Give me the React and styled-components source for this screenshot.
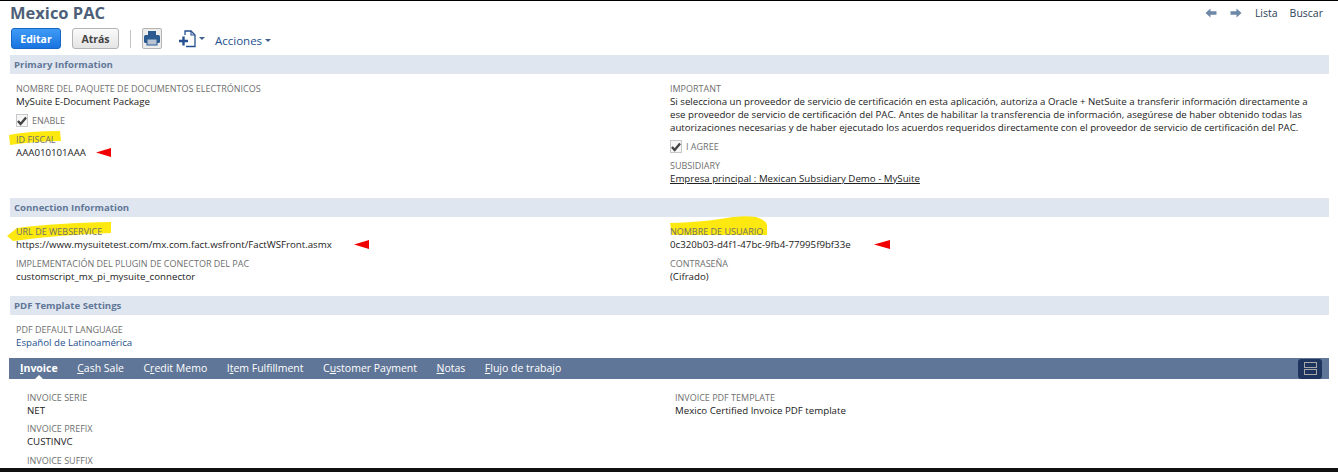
import styled, { createGlobalStyle } from "styled-components";

const GlobalStyle = createGlobalStyle`
html,body{margin:0;padding:0;background:#fff;overflow:hidden;}
body{font-family:"Open Sans","Liberation Sans",sans-serif;font-size:10px;color:#222;}
`

const SECTION_BG = "#e0e6ef"
const SLATE = "#5f7698"

function ArrowLeft({ color }) {
    return (
        <svg width="12" height="10" viewBox="0 0 12 10">
            <path d="M5.5 0.5 L0.5 5 L5.5 9.5 L5.5 6.8 L11.5 6.8 L11.5 3.2 L5.5 3.2 Z" fill={color} />
        </svg>
    )
}

function ArrowRight({ color }) {
    return (
        <svg width="12" height="10" viewBox="0 0 12 10">
            <path d="M6.5 0.5 L11.5 5 L6.5 9.5 L6.5 6.8 L0.5 6.8 L0.5 3.2 L6.5 3.2 Z" fill={color} />
        </svg>
    )
}

function RedArrow({ width = 15 }) {
    return (
        <svg width={width} height="9" viewBox="0 0 15 9" preserveAspectRatio="none">
            <path d="M0 4.5 L15 0 L15 9 Z" fill="#f00000" />
        </svg>
    )
}

function Check() {
    return (
        <CheckBox>
            <svg width="11" height="10" viewBox="0 0 11 10">
                <path d="M1 5 L4 8.2 L10 1.2" fill="none" stroke="#444" strokeWidth="2.6" />
            </svg>
        </CheckBox>
    )
}

function Field({ label, children, arrow, arrowGap, arrowWidth, mark, link, mt }) {
    return (
        <FieldBox mt={mt}>
            <Label>
                {mark}
                <span>{label}</span>
            </Label>
            <ValueRow>
                <Value link={link}>{children}</Value>
                {arrow && <ArrowSlot gap={arrowGap}><RedArrow width={arrowWidth} /></ArrowSlot>}
            </ValueRow>
        </FieldBox>
    )
}

const tabs = [
    { name: "Invoice", key: "I", rest: "nvoice", active: true },
    { name: "Cash Sale", key: "C", rest: "ash Sale" },
    { name: "Credit Memo", pre: "C", key: "r", rest: "edit Memo" },
    { name: "Item Fulfillment", pre: "I", key: "t", rest: "em Fulfillment" },
    { name: "Customer Payment", pre: "C", key: "u", rest: "stomer Payment" },
    { name: "Notas", key: "N", rest: "otas" },
    { name: "Flujo de trabajo", key: "F", rest: "lujo de trabajo" },
]

export default function App() {
    return (
        <Page>
            <GlobalStyle />
            <TitleRow>
                <Title>Mexico PAC</Title>
                <TopNav>
                    <ArrowLeft color="#6d87a6" />
                    <NavArrow><ArrowRight color="#6d87a6" /></NavArrow>
                    <NavLink>Lista</NavLink>
                    <NavLink>Buscar</NavLink>
                </TopNav>
            </TitleRow>
            <Toolbar>
                <PrimaryButton>Editar</PrimaryButton>
                <SecondaryButton>Atrás</SecondaryButton>
                <Separator />
                <IconButton>
                    <svg width="16" height="15" viewBox="0 0 16 15">
                        <path d="M4 0 H12 V4 H4 Z" fill="#2b5a91" />
                        <rect x="0" y="4" width="16" height="8" rx="1.5" fill="#2b5a91" />
                        <rect x="3" y="8" width="10" height="6" fill="#b8c4d4" stroke="#2b5a91" />
                    </svg>
                </IconButton>
                <NewIcon>
                    <svg width="17" height="18" viewBox="0 0 17 18">
                        <path d="M6 5 V1 H12 L16 5 V16.5 H7" fill="none" stroke="#24508f" strokeWidth="1.3" />
                        <path d="M12 1 V5 H16" fill="none" stroke="#24508f" strokeWidth="1.1" />
                        <path d="M0 11 H9 M4.5 6.5 V15.5" stroke="#24508f" strokeWidth="2.4" />
                    </svg>
                    <Caret />
                </NewIcon>
                <Actions>Acciones<Caret /></Actions>
            </Toolbar>

            <SectionBar mt="6px">Primary Information</SectionBar>
            <TwoCols>
                <Col>
                    <Field label="NOMBRE DEL PAQUETE DE DOCUMENTOS ELECTRÓNICOS">MySuite E-Document Package</Field>
                    <CheckRow><Check /><CheckLabel>ENABLE</CheckLabel></CheckRow>
                    <Field
                        mt="6px"
                        label="ID FISCAL"
                        arrow
                        arrowGap="10px"
                        mark={
                            <Marker width="54" height="16" viewBox="0 0 54 16" left="-8px" top="-3px">
                                <path d="M1 5 Q20 1 52 1 L53 11 Q30 11 2 15 Z" fill="#fde910" />
                            </Marker>
                        }
                    >AAA010101AAA</Field>
                </Col>
                <Col>
                    <FieldBox>
                        <Label><span>IMPORTANT</span></Label>
                        <Paragraph>
                            Si selecciona un proveedor de servicio de certificación en esta aplicación, autoriza a Oracle + NetSuite a transferir información directamente a<br />
                            ese proveedor de servicio de certificación del PAC. Antes de habilitar la transferencia de información, asegúrese de haber obtenido todas las<br />
                            autorizaciones necesarias y de haber ejecutado los acuerdos requeridos directamente con el proveedor de servicio de certificación del PAC.
                        </Paragraph>
                    </FieldBox>
                    <CheckRow><Check /><CheckLabel>I AGREE</CheckLabel></CheckRow>
                    <Field mt="6px" label="SUBSIDIARY" link>Empresa principal : Mexican Subsidiary Demo - MySuite</Field>
                </Col>
            </TwoCols>

            <SectionBar mt="13px">Connection Information</SectionBar>
            <TwoCols>
                <Col>
                    <Field
                        label="URL DE WEBSERVICE"
                        arrow
                        arrowGap="22px"
                        mark={
                            <Marker width="104" height="20" viewBox="0 0 104 20" left="-9px" top="-3px">
                                <path d="M10 6 Q50 1 104 0 L104 11 Q50 13 6 19 L0 14 Z" fill="#fde910" />
                            </Marker>
                        }
                    >https://www.mysuitetest.com/mx.com.fact.wsfront/FactWSFront.asmx</Field>
                    <Field mt="6px" label="IMPLEMENTACIÓN DEL PLUGIN DE CONECTOR DEL PAC">customscript_mx_pi_mysuite_connector</Field>
                </Col>
                <Col>
                    <Field
                        label="NOMBRE DE USUARIO"
                        arrow
                        arrowGap="23px"
                        arrowWidth={16}
                        mark={
                            <Marker width="98" height="20" viewBox="0 0 98 20" left="0" top="-9px">
                                <path d="M0 7 Q30 6 50 3 Q70 -1 86 1 Q96 4 97 9 L97 19 L2 19 Z" fill="#fde910" />
                            </Marker>
                        }
                    >0c320b03-d4f1-47bc-9fb4-77995f9bf33e</Field>
                    <Field mt="6px" label="CONTRASEÑA">(Cifrado)</Field>
                </Col>
            </TwoCols>

            <SectionBar mt="13px">PDF Template Settings</SectionBar>
            <SingleCol>
                <Field label="PDF DEFAULT LANGUAGE"><Blue>Español de Latinoamérica</Blue></Field>
            </SingleCol>

            <TabBar>
                <TabList>
                    {tabs.map((t) => (
                        <Tab key={t.name} active={t.active}>
                            {t.pre}<u>{t.key}</u>{t.rest}
                        </Tab>
                    ))}
                </TabList>
                <LayoutToggle>
                    <ToggleRect />
                    <ToggleRect />
                </LayoutToggle>
            </TabBar>
            <TabCols>
                <TabCol>
                    <Field label="INVOICE SERIE">NET</Field>
                    <Field mt="5px" label="INVOICE PREFIX">CUSTINVC</Field>
                    <Field mt="6px" label="INVOICE SUFFIX"></Field>
                </TabCol>
                <TabCol>
                    <Field label="INVOICE PDF TEMPLATE">Mexico Certified Invoice PDF template</Field>
                </TabCol>
            </TabCols>
        </Page>
    )
}

const Page = styled.div`
box-sizing:border-box;
width:1338px;
height:472px;
overflow:hidden;
border-top:1px solid #000;
border-bottom:4px solid #111;
`
const TitleRow = styled.div`
display:flex;
justify-content:space-between;
align-items:center;
height:24px;
padding:0 15px 0 10px;
`
const Title = styled.h1`
margin:0;
font-size:16.5px;
font-weight:700;
color:#4d5f79;
line-height:22px;
`
const TopNav = styled.div`
display:flex;
align-items:center;
font-size:10.5px;
color:#2c3e57;
`
const NavArrow = styled.span`
display:flex;
margin:0 13px 0 13px;
`
const NavLink = styled.span`
margin-right:12px;
&:last-child{margin-right:0;}
`
const Toolbar = styled.div`
display:flex;
align-items:center;
height:21px;
margin-top:3px;
padding-left:11px;
`
const PrimaryButton = styled.button`
box-sizing:border-box;
width:50px;
height:21px;
padding:0;
border:1px solid #1467c5;
border-radius:3px;
background:linear-gradient(#3f9bf5,#1a74e0);
color:#fff;
font:700 10.5px "Open Sans",sans-serif;
`
const SecondaryButton = styled.button`
box-sizing:border-box;
width:47px;
height:21px;
margin-left:11px;
padding:0;
border:1px solid #b4b4b4;
border-radius:3px;
background:linear-gradient(#fafafa,#e4e4e4);
color:#444;
font:700 10.5px "Open Sans",sans-serif;
`
const Separator = styled.div`
width:1px;
height:18px;
margin-left:11px;
background:#c4c4c4;
`
const IconButton = styled.button`
display:flex;
align-items:center;
justify-content:center;
box-sizing:border-box;
width:20px;
height:21px;
margin-left:11px;
padding:0;
border:1px solid #b4b4b4;
border-radius:2px;
background:#ececec;
`
const NewIcon = styled.div`
display:flex;
align-items:center;
margin-left:17px;
`
const Caret = styled.span`
display:inline-block;
width:0;
height:0;
margin-left:3px;
border-left:3px solid transparent;
border-right:3px solid transparent;
border-top:3.5px solid #3f5f8c;
`
const Actions = styled.div`
display:flex;
align-items:center;
margin-left:10px;
padding-top:4px;
font-size:11.5px;
color:#24508f;
`
const SectionBar = styled.div`
box-sizing:border-box;
height:19px;
margin:${(p) => p.mt} 9px 0 10px;
padding-left:4px;
background:${SECTION_BG};
color:${SLATE};
font-size:9.6px;
font-weight:700;
line-height:19px;
`
const TwoCols = styled.div`
display:grid;
grid-template-columns:654px 1fr;
padding:8px 18px 0 16px;
`
const Col = styled.div`
display:flex;
flex-direction:column;
min-width:0;
`
const SingleCol = styled.div`
padding:8px 16px 0;
`
const FieldBox = styled.div`
margin-top:${(p) => p.mt || "0"};
`
const Label = styled.div`
position:relative;
width:max-content;
height:13px;
font-size:9px;
line-height:13px;
color:#6f6f6f;
span{position:relative;}
`
const Marker = styled.svg`
position:absolute;
left:${(p) => p.left};
top:${(p) => p.top};
`
const ValueRow = styled.div`
display:flex;
align-items:center;
height:13px;
`
const Value = styled.span`
font-size:9.7px;
line-height:13px;
color:#222;
text-decoration:${(p) => (p.link ? "underline" : "none")};
`
const Blue = styled.span`
color:#24508f;
`
const ArrowSlot = styled.span`
display:flex;
margin-left:${(p) => p.gap};
`
const Paragraph = styled.p`
margin:0;
font-size:9.7px;
line-height:13px;
white-space:nowrap;
color:#222;
`
const CheckRow = styled.div`
display:flex;
align-items:flex-end;
height:17px;
margin-top:2px;
`
const CheckBox = styled.span`
display:flex;
align-items:center;
justify-content:center;
box-sizing:border-box;
width:12px;
height:13px;
border:1px solid #c8c8c8;
background:#f6f6f6;
`
const CheckLabel = styled.span`
margin-left:4px;
font-size:9px;
line-height:13px;
color:#6f6f6f;
`
const TabBar = styled.div`
display:flex;
justify-content:space-between;
align-items:center;
height:21px;
margin:9px 9px 0 9px;
padding-right:7px;
background:#5f7698;
`
const TabList = styled.div`
display:flex;
gap:19.5px;
padding-left:11px;
`
const Tab = styled.span`
position:relative;
color:#fff;
font-size:10.5px;
font-weight:${(p) => (p.active ? 700 : 400)};
line-height:21px;
&::after{
    content:${(p) => (p.active ? '""' : "none")};
    position:absolute;
    left:50%;
    bottom:0;
    margin-left:-4px;
    border-left:4px solid transparent;
    border-right:4px solid transparent;
    border-bottom:4px solid #fff;
}
`
const LayoutToggle = styled.div`
display:flex;
flex-direction:column;
align-items:center;
justify-content:center;
gap:1px;
box-sizing:border-box;
width:24px;
height:20px;
border-radius:3px;
background:#1f3560;
`
const ToggleRect = styled.span`
box-sizing:border-box;
width:13px;
height:6px;
border:1px solid #a8a8a8;
`
const TabCols = styled.div`
display:grid;
grid-template-columns:648px 1fr;
padding:12px 18px 0 27px;
`
const TabCol = styled.div`
display:flex;
flex-direction:column;
`
